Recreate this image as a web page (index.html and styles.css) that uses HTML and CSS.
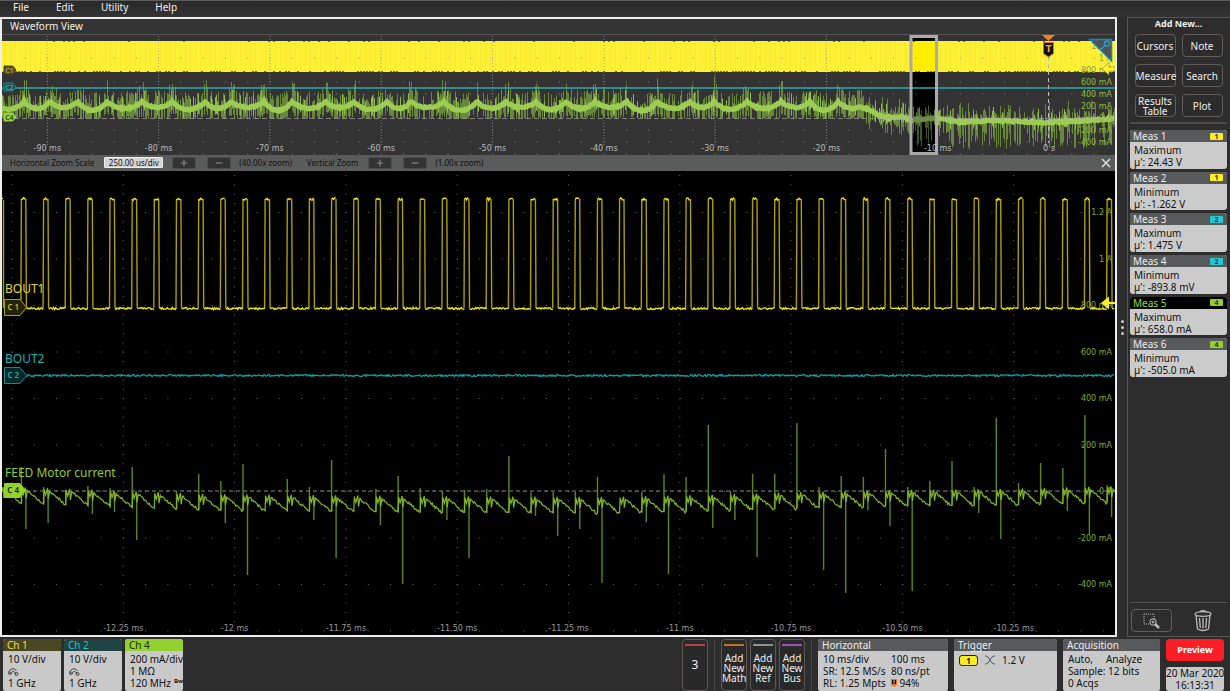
FILE: index.html
```html
<!DOCTYPE html>
<html lang="en">
<head>
<meta charset="utf-8">
<title>Oscilloscope</title>
<link rel="stylesheet" href="styles.css">
</head>
<body>
<nav class="menubar">
  <button>File</button><button>Edit</button><button>Utility</button><button>Help</button>
</nav>
<main class="workspace">
  <section class="view">
    <h1 class="view-title">Waveform View</h1>
    <svg class="plot overview" id="overview" viewBox="2 35 1113 120"></svg>
    <div class="zoombar">
      <label for="hscale">Horizontal Zoom Scale</label>
      <input id="hscale" class="scale" value="250.00 us/div">
      <button class="step first" aria-label="Horizontal zoom in"><svg viewBox="0 0 10 10"><path d="M5 1V9M1 5H9"/></svg></button>
      <button class="step" aria-label="Horizontal zoom out"><svg viewBox="0 0 10 10"><path d="M1 5H9"/></svg></button>
      <span>(40.00x zoom)</span>
      <span class="vlabel">Vertical Zoom</span>
      <button class="step" aria-label="Vertical zoom in"><svg viewBox="0 0 10 10"><path d="M5 1V9M1 5H9"/></svg></button>
      <button class="step" aria-label="Vertical zoom out"><svg viewBox="0 0 10 10"><path d="M1 5H9"/></svg></button>
      <span>(1.00x zoom)</span>
      <button class="close" aria-label="Close zoom"><svg viewBox="0 0 10 10"><path d="M1 1L9 9M9 1L1 9"/></svg></button>
    </div>
    <svg class="plot detail" id="detail" viewBox="2 171 1113 464"></svg>
  </section>
  <div class="grip"><i></i><i></i><i></i></div>
  <aside class="sidebar">
    <h2>Add New...</h2>
    <div class="actions">
      <button>Cursors</button><button>Note</button>
      <button>Measure</button><button>Search</button>
      <button>Results Table</button><button>Plot</button>
    </div>
    <div class="measurements">
      <article class="meas"><header>Meas 1<b class="c1">1</b></header><p>Maximum<br>µ': 24.43 V</p></article>
      <article class="meas"><header>Meas 2<b class="c1">1</b></header><p>Minimum<br>µ': -1.262 V</p></article>
      <article class="meas"><header>Meas 3<b class="c2">2</b></header><p>Maximum<br>µ': 1.475 V</p></article>
      <article class="meas"><header>Meas 4<b class="c2">2</b></header><p>Minimum<br>µ': -893.8 mV</p></article>
      <article class="meas selected"><header>Meas 5<b class="c4">4</b></header><p>Maximum<br>µ': 658.0 mA</p></article>
      <article class="meas"><header>Meas 6<b class="c4">4</b></header><p>Minimum<br>µ': -505.0 mA</p></article>
    </div>
    <div class="tools">
      <button class="tool" aria-label="Draw a box zoom"><svg width="18" height="18" viewBox="0 0 18 18"><path class="dotted" d="M1 2H11V8M1 2V12H6"/><path class="handle" d="M12 12L16 16"/><circle cx="10" cy="10" r="3.2"/><path class="plus" d="M8.5 10H11.500M10 8.500V11.500"/></svg></button>
      <button class="trash" aria-label="Delete"><svg width="20" height="22" viewBox="0 0 20 22"><path d="M3 5L4.500 19Q10 22 15.500 19L17 5"/><ellipse cx="10" cy="4" rx="8" ry="2.300"/><path d="M6.500 8L7.300 18M10 8V18.500M13.500 8L12.700 18M7 1.500Q10 0 13 1.500"/></svg></button>
    </div>
  </aside>
</main>
<footer class="settings">
  <div class="channels">
    <article class="badge channel ch1"><header>Ch 1</header><div class="lines"><span>10 V/div</span><svg class="probe" viewBox="0 0 11 9"><path d="M1 7A1 1 0 0 1 1 5A4 4 0 0 1 8.500 4M3.500 7V5.500A2 2 0 0 1 6.500 5"/><circle cx="2" cy="6.500" r="1"/><path d="M7 5L8 7"/><circle cx="8.500" cy="7" r="1.500"/></svg><span>1 GHz</span></div></article>
    <article class="badge channel ch2"><header>Ch 2</header><div class="lines"><span>10 V/div</span><svg class="probe" viewBox="0 0 11 9"><path d="M1 7A1 1 0 0 1 1 5A4 4 0 0 1 8.500 4M3.500 7V5.500A2 2 0 0 1 6.500 5"/><circle cx="2" cy="6.500" r="1"/><path d="M7 5L8 7"/><circle cx="8.500" cy="7" r="1.500"/></svg><span>1 GHz</span></div></article>
    <article class="badge channel ch4"><header>Ch 4</header><div class="lines"><span>200 mA/div</span><span>1 MΩ</span><span class="bandwidth">120 MHz <small>B<small>w</small></small></span></div></article>
  </div>
  <button class="add red">3</button>
  <div class="adders">
    <button class="add orange">Add New Math</button>
    <button class="add gray">Add New Ref</button>
    <button class="add purple">Add New Bus</button>
  </div>
  <article class="badge horizontal"><header>Horizontal</header><div class="pair"><span>10 ms/div</span><span>100 ms</span><span>SR: 12.5 MS/s</span><span>80 ns/pt</span><span>RL: 1.25 Mpts</span><span><svg class="mini" viewBox="0 0 6 8"><path d="M0 0H6V6L3 8L0 6Z" fill="#e87820"/><path d="M1 1H5V5H1Z" fill="#111"/><path d="M2 2H4M3 2V5" stroke="#f59038"/></svg> 94%</span></div></article>
  <article class="badge trigger"><header>Trigger</header><div class="row"><b>1</b><svg width="12" height="10" viewBox="0 0 12 10"><path d="M1 1H2Q4 1 6 5T10 9H11M1 9H2Q4 9 6 5T10 1H11"/></svg><span>1.2 V</span></div></article>
  <article class="badge acquisition"><header>Acquisition</header><div class="lines"><span class="split"><i>Auto,</i><i>Analyze</i></span><span>Sample: 12 bits</span><span>0 Acqs</span></div></article>
  <div class="status"><button class="preview">Preview</button><time>20 Mar 2020<br>16:13:31</time></div>
</footer>
<script src="waveforms.js"></script>
</body>
</html>
```
FILE: styles.css
```css
* { box-sizing: border-box; }
body { margin: 0; background: #2d2d2d; color: #eee; font: 10px/12px "Noto Sans", sans-serif; }
button { font: inherit; color: inherit; margin: 0; padding: 0; border: 0; background: none; }
h1, h2, p { margin: 0; font: inherit; }
i { font-style: normal; }

.menubar { display: flex; align-items: flex-start; gap: 27px; height: 17px; padding: 0 13px; border-top: 1px solid #5b5d5c; background: linear-gradient(#292929, #333); }
.menubar button { line-height: 13px; }

.workspace { display: grid; grid-template-columns: minmax(0, 1fr) 10px 103px; }
.view { border: 2px solid #eee; background: #333; }
.view-title { height: 16px; padding-left: 8px; line-height: 15px; border-bottom: 1px solid #555; }
.plot { display: block; width: 100%; height: auto; font-family: "DejaVu Sans", sans-serif; font-size: 8px; }
.overview { background: #333; }
.detail { background: #000; }
.zoombar { display: flex; align-items: center; height: 16px; padding: 0 4px 1px 8px; background: #5a5c5b; color: #111; font-size: 8px; }
.scale { width: 59px; height: 11px; margin-left: 10px; padding: 0; border: 1px solid #eee; border-radius: 1px; background: #d4d4d4; color: #111; font: 8px/9px "Noto Sans", sans-serif; text-align: center; }
.step { display: grid; place-items: center; width: 24px; height: 12px; margin-right: 11px; border: 1px solid #4d4d4d; border-radius: 2px; background: #333; }
.step.first { margin-left: 9px; }
.step svg { width: 8px; height: 8px; stroke: #888; stroke-width: 1.500; }
.step + span { margin-left: -3px; }
.vlabel { margin: 0 10px 0 15px; }
.close { margin-left: auto; width: 10px; height: 10px; }
.close svg { display: block; stroke: #ddd; stroke-width: 1.500; }

.grip { display: flex; flex-direction: column; align-items: center; justify-content: center; gap: 3px; }
.grip i { width: 3px; height: 3px; border-radius: 50%; background: #ccc; }

.sidebar { display: flex; flex-direction: column; padding: 0 3px 0 2px; border: 1px solid #555; border-right: 0; }
.sidebar h2 { padding: 0 0 4px; font-size: 9px; font-weight: 700; text-align: center; }
.actions { display: grid; grid-template-columns: 41px 41px; gap: 7px 6px; justify-content: center; padding-bottom: 5px; border-bottom: 2px solid #4c4c4c; }
.actions button { height: 23px; border: 1px solid #625d59; border-radius: 4px; background: #2c2c2c; line-height: 10px; white-space: normal; }
.measurements { display: grid; grid-auto-rows: 1fr; gap: 3px; height: 247px; margin-top: 6px; }
.meas { border-radius: 3px; background: #cbcbcb; color: #111; overflow: hidden; }
.meas header { display: flex; align-items: center; justify-content: space-between; height: 12px; padding: 0 4px 0 3px; background: #57595b; color: #eee; }
.meas b { width: 13px; height: 7px; border-radius: 1px; color: #333; font-size: 7px; line-height: 7px; text-align: center; }
.c1 { background: #fbee22; }
.c2 { background: #22c9d3; }
.c4 { background: #92cf2e; }
.meas p { padding: 2px 4px 0; line-height: 12px; }
.meas.selected header { background: #000; color: #9bdb31; }
.tools { display: flex; align-items: center; justify-content: space-between; margin-top: auto; padding: 6px 14px 4px 1px; border-top: 1px solid #555; }
.tool { display: grid; place-items: center; width: 41px; height: 23px; border: 1px solid #625d59; border-radius: 4px; }
.tool svg, .trash svg { display: block; fill: none; stroke: #bbb; }
.tool .dotted { stroke-dasharray: 1 1; }
.tool .handle { stroke-width: 2.500; }
.tool .plus { stroke-width: 1; }
.trash svg { stroke-width: 1.300; }

.settings { display: flex; height: 54px; padding: 2px 6px 0 3px; }
.channels { display: flex; gap: 3px; margin-right: auto; }
.badge { border-radius: 3px 3px 2px 2px; background: #c9c9c9; color: #111; overflow: hidden; }
.badge header { height: 12px; padding-left: 4px; line-height: 12px; background: #57595b; color: #eee; }
.channel { width: 58px; }
.ch1 header { background: #4b4722; color: #efe23a; }
.ch2 header { background: #1e4443; color: #22c4c9; }
.ch4 header { background: #92d12e; color: #222; }
.lines { display: grid; grid-auto-rows: 12px; padding: 2px 0 0 5px; white-space: nowrap; }
.probe { width: 11px; height: 9px; margin-top: 2px; fill: none; stroke: #444; stroke-width: 1; }
.bandwidth { display: flex; gap: 3px; }
.bandwidth small { font-size: 6px; line-height: 8px; font-weight: 700; }
.add { width: 26px; border: 1px solid #5c5754; border-radius: 4px; padding-top: 5px; line-height: 10px; background: linear-gradient(var(--mark), var(--mark)) 50% 4px / 20px 2px no-repeat #292929; }
.red { --mark: #bd3e4c; font-size: 12px; padding: 0; }
.orange { --mark: #bd7423; }
.gray { --mark: #8d9295; }
.purple { --mark: #9950bd; }
.adders { display: flex; gap: 3px; margin: 0 6px; padding: 0 6px; border: solid #484848; border-width: 0 1px; }
.horizontal { width: 130px; margin-right: 6px; }
.pair { display: grid; grid-template-columns: 68px 1fr; grid-auto-rows: 12px; padding: 2px 0 0 5px; white-space: nowrap; }
.mini { width: 6px; height: 8px; }
.trigger { width: 103px; margin-right: 6px; }
.row { display: flex; align-items: center; gap: 6px; padding: 3px 5px; }
.row b { width: 19px; height: 11px; border: 1px solid #222; border-radius: 3px; background: #f8ec22; font-size: 8px; line-height: 9px; text-align: center; }
.row svg { fill: none; stroke: #557; }
.acquisition { width: 97px; margin-right: 6px; }
.split { display: flex; gap: 13px; }
.status { display: flex; flex-direction: column; justify-content: space-between; width: 58px; text-align: center; }
.preview { height: 22px; border-radius: 4px; background: #fc1f28; color: #fff; font-size: 9px; font-weight: 700; }
.status time { height: 24px; border-radius: 3px; background: #c9c9c9; color: #111; line-height: 12px; white-space: nowrap; }
```
FILE: waveforms.js
```js
let seed = 7;
function rnd() { seed = (seed * 1103515245 + 12345) % 2147483648; return seed / 2147483648; }
function noise(a) { return (rnd() - 0.5) * 2 * a; }
function path(d, stroke, width, extra) {
  return `<path d="${d}" fill="none" stroke="${stroke}" stroke-width="${width || 1}" ${extra || ''}/>`;
}
function label(x, y, text, fill, extra) {
  return `<text x="${x}" y="${y}" fill="${fill}" ${extra || ''}>${text}</text>`;
}
const mid = 'text-anchor="middle"', end = 'text-anchor="end"';
const DIV = 111.3;

function tag(x, y, w, h, text, fill, stroke, ink, size) {
  const t = w - h * 0.4;
  return `<path d="M${x} ${y - h / 2}H${x + t}L${x + w} ${y}L${x + t} ${y + h / 2}H${x}Z" fill="${fill}" stroke="${stroke}"/>` +
    label(x + t / 2 + 1, y + size * 0.36, text, ink, `${mid} font-family="Noto Sans" font-weight="600" font-size="${size}"`);
}

function drawOverview() {
  let s = '';
  s += '<rect x="911" y="35" width="26" height="120" fill="#000"/>';
  s += '<rect x="2" y="41" width="1113" height="31" fill="#fdf035"/>';
  let stripes = '', ragged = '';
  for (let x = 5; x < 1115; x += 5) stripes += `M${x}.5 42V71`;
  for (let x = 3; x < 1115; x += 3) if (rnd() > 0.5) ragged += `M${x} 71.500h2`;
  for (let x = 3; x < 1115; x += 5) if (rnd() > 0.7) ragged += `M${x} 41.500h2`;
  s += path(stripes, '#e8dc30', 1, 'opacity=".35"') + path(ragged, '#77732c');
  s += '<rect x="912" y="42" width="24" height="29" fill="#ffee00"/>';

  let grid = '';
  for (let i = 0; i < 9; i++) grid += `M${47.3 + DIV * i} 36V145`;
  s += path(grid, '#999', 1, 'stroke-dasharray="1 2" opacity=".7"');
  let dots = '';
  for (let x = 24.5; x < 1115; x += 22.27) for (const y of [58, 82, 94, 130, 142]) dots += `M${x} ${y}h1`;
  for (let x = 24.5; x < 1115; x += 22.27) dots += `M${x} 154h1`;
  s += path(dots, '#888');

  /* Crest positions of the averaged motor current */
  const crests = [-6, 24, 50, 78, 107, 142, 172, 205, 231, 264, 292, 326, 354, 387, 411, 444, 477, 506, 536, 566, 595, 627, 657, 690, 714, 747, 781, 810, 838, 866];
  const tail = [[860, 107], [868, 109], [880, 116], [890, 118], [900, 116.5], [912, 120], [935, 118], [960, 122], [995, 120.5], [1045, 122.5], [1080, 121], [1120, 118]];
  const base = x => {
    if (x < 860) {
      let i = 1;
      while (crests[i] < x) i++;
      const t = (x - crests[i - 1]) / (crests[i] - crests[i - 1]);
      const dip = [6, 8, 7, 6, 9, 7][i % 6];
      return 101.5 + dip * Math.pow(Math.sin(Math.PI * t), 0.8);
    }
    for (let i = 1; i < tail.length; i++) if (x <= tail[i][0]) {
      const [a, u] = tail[i - 1], [b, v] = tail[i];
      return u + (v - u) * (x - a) / (b - a);
    }
    return 120;
  };
  let thin = '', bright = '', centre = '';
  for (let x = 2; x < 1115; x += 1) {
    const b = base(x);
    const late = x > 865;
    if (rnd() > 0.35) {
      const up = late ? 4 + rnd() * rnd() * 20 : 3 + rnd() * 15 + (b < 104 ? rnd() * 8 : 0);
      const down = late ? 4 + rnd() * (x < 910 ? 16 : 24) : 8 + rnd() * 8;
      thin += `M${x}.5 ${(b - up).toFixed(1)}V${(late ? b + down : Math.min(118.5, b + down)).toFixed(1)}`;
    }
    if (rnd() > 0.88) bright += `M${x}.5 ${(b - 6 - rnd() * 8).toFixed(1)}V${(b + 5 + rnd() * 4).toFixed(1)}`;
    centre += `${x === 2 ? 'M' : 'L'}${x} ${(b + noise(0.7)).toFixed(1)}`;
  }
  s += path(thin, '#769b3e', 1, 'opacity=".8"') + path(bright, '#8dbb49');
  s += path(centre, '#9dcc52', 5);
  s += path('M2 88H1115', '#2cabb0', 1.5);
  s += path('M14 118.500H1115', '#aaa', 1, 'stroke-dasharray="5 3" opacity=".65"');
  s += '<rect x="912.500" y="106" width="23" height="42" fill="#000" opacity=".3"/>';
  s += '<rect x="911" y="36.500" width="25.500" height="117" fill="none" stroke="#aaa" stroke-width="3"/>';
  for (let i = 0; i < 10; i++) {
    s += label(47.3 + DIV * i, 151, i === 9 ? '0 s' : `-${90 - 10 * i} ms`, '#bbb', mid);
  }
  [['1.2 A', 49], ['1 A', 61], ['800 mA', 73], ['600 mA', 85], ['400 mA', 97], ['200 mA', 109], ['0 A', 121], ['-200 mA', 133], ['-400 mA', 145]]
    .forEach(([t, y]) => { s += label(1112, y, t, y < 75 ? '#8f9a2c' : '#8bbd3d', end); });
  s += tag(4, 70, 12, 8, 'C1', '#4d4b28', '#4b4925', '#b6aa31', 7);
  s += tag(4, 87, 12, 8, 'C2', '#22484a', '#238c91', '#31b7bb', 7);
  s += tag(4, 117, 12, 8, 'C4', '#95d13b', '#95d13b', '#344d1b', 7);
  s += path('M1048.500 57V143', '#bbb', 1, 'stroke-dasharray="4 3"');
  s += '<path d="M1042 35H1055L1048.500 41Z" fill="#f68020"/><path d="M1043.500 42.500H1053.500V53.500L1048.500 57L1043.500 53.500Z" fill="#111" stroke="#e86b1c"/>';
  s += label(1048.5, 51.5, 'T', '#ff9a3a', mid + ' font-weight="bold" font-size="9"');
  s += '<path d="M1090 39.500H1111.500V61Z" fill="#515352" stroke="#1688ba" stroke-width="1.500"/>';
  s += '<circle cx="1107" cy="43.500" r="2.500" fill="none" stroke="#20a1dc" stroke-width="1.300"/>' + path('M1105 45.500L1100 50', '#20a1dc', 1.5);
  s += '<path d="M1102 69L1109 62V67H1115V71H1109V75Z" fill="#fff033" stroke="#827d2c" stroke-width=".5"/>';
  document.getElementById('overview').innerHTML = s;
}

function drawDetail() {
  const P = 22.157, E0 = 21.4;
  let s = '', dots = '';
  for (let i = 0; i < 10; i++) for (let y = 175.5; y < 625; y += 9.3) dots += `M${(11.5 + DIV * i).toFixed(1)} ${y.toFixed(1)}h1`;
  for (let j = 0; j < 10; j++) for (let i = 0; i < 50; i++) dots += `M${(11.5 + 22.27 * i).toFixed(1)} ${(212.5 + 46.5 * j).toFixed(1)}h1`;
  s += path(dots, '#666');
  s += path('M26 491H1115', '#aaa', 1, 'stroke-dasharray="4 3" opacity=".8"');

  const time = ['-12.25 ms', '-12 ms', '-11.75 ms', '-11.50 ms', '-11.25 ms', '-11 ms', '-10.75 ms', '-10.50 ms', '-10.25 ms'];
  time.forEach((t, i) => { s += label(123.3 + DIV * i, 631, t, '#999', mid); });
  ['1.2 A', '1 A', '800 mA', '600 mA', '400 mA', '200 mA', '0 A', '-200 mA', '-400 mA']
    .forEach((t, j) => { s += label(1112, 215 + 46.5 * j, t, '#7bab29', end); });

  let edges = 'M3.500 200V308', flats = 'M2 198.500H3';
  const flat = (a, b, y, n) => {
    let d = `M${a.toFixed(1)} ${y}`;
    for (let x = a + 1; x < b; x += 1) d += `L${x.toFixed(1)} ${(y + noise(n)).toFixed(1)}`;
    return d;
  };
  for (let k = -1; k < 50; k++) {
    const e = E0 + P * k;
    if (k >= 0) {
      edges += `M${(e - 0.5).toFixed(1)} 308L${e.toFixed(1)} 199M${(e + 4.4).toFixed(1)} 199L${(e + 5).toFixed(1)} 308`;
      flats += flat(e, e + 4.6, 199, 1.2);
    }
    flats += flat(e + 5, Math.min(e + P, 1115), 308.5, 1);
  }
  s += path(edges, '#a89f0a', 1.4) + path(flats, '#eee218', 1.4);
  s += path(flat(26, 1115, 375.5, 1), '#159da3', 1.3);

  /* Current spikes: [period index, peak y, trough y] */
  const spikes = [[0,467,529],[1,487,523],[2,490,0],[3,486,514],[4,488,512],[5,467,540],[7,491,0],[8,474,0],[9,481,523],[10,464,575],[12,479,0],[13,487,520],[14,460,558],[16,489,525],[17,476,584],[18,488,0],[19,491,520],[20,490,558],[21,489,0],[22,456,0],[23,492,516],[24,492,536],[25,492,529],[26,477,583],[28,492,522],[29,474,574],[30,477,0],[31,425,528],[32,491,520],[33,474,557],[34,474,0],[35,423,0],[36,487,570],[37,476,593],[38,477,510],[39,449,526],[40,487,591],[41,481,0],[42,461,0],[43,487,513],[44,418,539],[45,483,0],[46,463,0],[47,468,511],[48,415,535],[49,485,517]];
  const low = [[0, 503], [43, 504], [200, 510], [400, 512], [600, 513], [700, 511], [800, 508], [900, 506], [1000, 505], [1120, 502]];
  const bottom = x => {
    for (let i = 1; i < low.length; i++) if (x <= low[i][0]) {
      const [a, u] = low[i - 1], [b, v] = low[i];
      return u + (v - u) * (x - a) / (b - a);
    }
    return 502;
  };
  let saw = '', tall = '';
  for (let k = -1; k < 50; k++) {
    const e = E0 + P * k, b = bottom(Math.max(0, e));
    saw += `${k < 0 ? 'M' : 'L'}${e.toFixed(1)} ${b}L${(e + 0.5).toFixed(1)} ${b - 15}L${(e + 2).toFixed(1)} ${b - 9}L${(e + 4).toFixed(1)} ${b - 16}L${(e + 4.7).toFixed(1)} ${b - 5}L${(e + 6).toFixed(1)} ${b - 13}`;
    for (let t = 7; t < P - 0.5; t += 1) saw += `L${(e + t).toFixed(1)} ${(b - 13 + 13 * (t - 6) / 15 + noise(1.3)).toFixed(1)}`;
  }
  spikes.forEach(([k, u, d]) => {
    const e = E0 + P * k, b = bottom(e);
    tall += `M${e.toFixed(1)} ${b}V${u}`;
    if (d) tall += `M${(e + 4.5).toFixed(1)} ${b - 14}V${d}`;
  });
  s += path(tall, '#5c851d', 1.4) + path(saw, '#80b727', 1.2);

  const name = 'font-family="Noto Sans" font-size="12"';
  s += label(5, 293, 'BOUT1', '#e0d836', name) + label(5, 363, 'BOUT2', '#1bb2b7', name) + label(5, 477, 'FEED Motor current', '#8fca34', name);
  s += tag(4.5, 307.5, 22, 16, 'C 1', '#242207', '#a79f1c', '#c9bf2c', 8);
  s += tag(4.5, 375.5, 22, 16, 'C 2', '#06282a', '#13898e', '#22adb3', 8);
  s += tag(4.5, 490.5, 21, 14, 'C 4', '#92d12e', '#92d12e', '#222', 8);
  s += '<path d="M1101 303L1109 296.500V302H1115V304H1109V309.500Z" fill="#ffee2d"/>';
  document.getElementById('detail').innerHTML = s;
}
drawOverview();
drawDetail();
```
